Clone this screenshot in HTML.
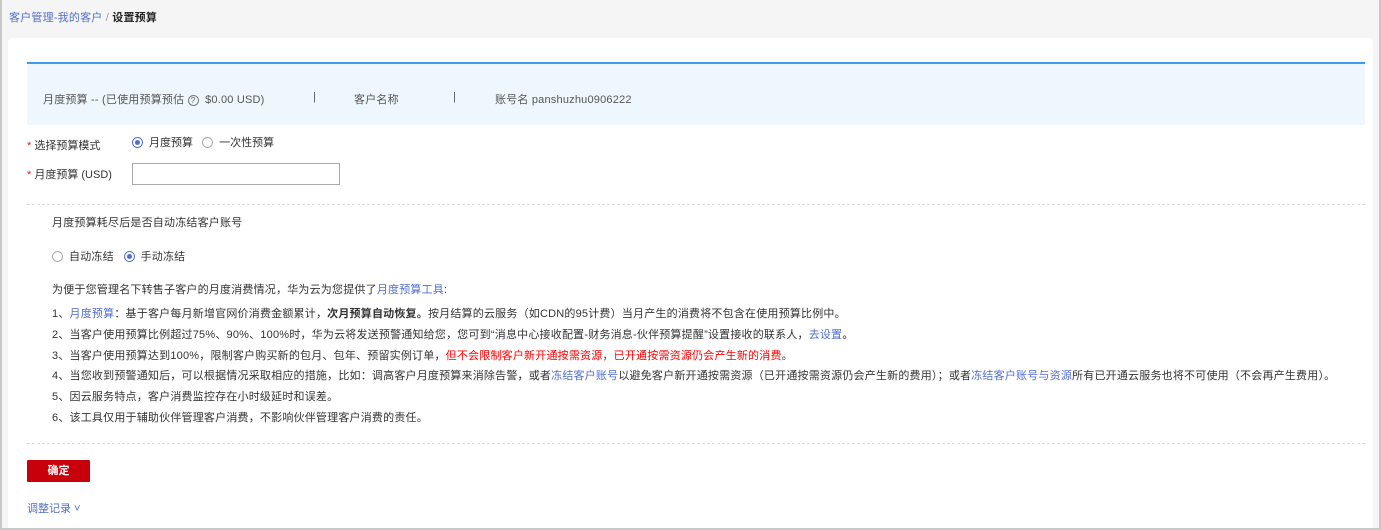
<!DOCTYPE html>
<html><head><meta charset="utf-8"><style>
*{margin:0;padding:0;box-sizing:border-box}
body{width:1381px;height:530px;overflow:hidden;background:#c8c8c8;font-family:"Liberation Sans","Noto Sans CJK SC",sans-serif;font-size:11px;color:#333;position:relative}
.frame{position:absolute;left:2px;top:0;width:1377px;height:528px;background:#f5f5f5}
.card{position:absolute;left:6px;top:38px;width:1365px;height:490px;background:#fff;border-radius:4px 4px 0 0}
.bc{position:absolute;left:7px;top:9px;font-size:11px;letter-spacing:0.2px}
.bc a{color:#526ecc}
.bc b{color:#222}
.banner{position:absolute;left:19px;top:24px;width:1338px;height:63px;background:#eef6fe;border-top:2px solid #3f9bf0}
.banner span{position:absolute;top:27px;color:#555;letter-spacing:0.2px}
.sep{color:#ccc}
.abs{position:absolute;white-space:nowrap}
.star{color:#e02020}
.radio{display:inline-block;width:11px;height:11px;border:1px solid #aaa;border-radius:50%;vertical-align:-2px;margin-right:6px;position:relative}
.radio.on{border-color:#526ecc}
.radio.on:after{content:"";position:absolute;left:2px;top:2px;width:5px;height:5px;border-radius:50%;background:#526ecc}
.dash{position:absolute;left:19px;width:1338px;border-top:1px dashed #ddd}
.blue{color:#526ecc}.red{color:#f00}
.line{position:absolute;left:44px;white-space:nowrap;letter-spacing:0.2px}
.btn{position:absolute;left:19px;top:422px;width:63px;height:22px;background:#c7000b;color:#fff;font-weight:bold;text-align:center;line-height:22px;border-radius:1px}
</style></head><body>
<div class="frame">
<div class="bc"><a>客户管理-我的客户</a> <span style="color:#999">/</span> <b>设置预算</b></div>
<div class="card">
<div class="banner">
<span style="left:16px">月度预算 -- (已使用预算预估 <span style="position:static;display:inline-block;width:11px;height:11px;border:1px solid #777;border-radius:50%;font-size:8px;text-align:center;line-height:9px">?</span> &nbsp;$0.00 USD)</span>
<span class="sep" style="left:286px">|</span>
<span style="left:327px">客户名称</span>
<span class="sep" style="left:426px">|</span>
<span style="left:468px">账号名 panshuzhu0906222</span>
</div>
<div class="abs" style="left:19px;top:99px"><span class="star">*</span> 选择预算模式</div>
<div class="abs" style="left:124px;top:96px"><span class="radio on"></span>月度预算 &nbsp;&nbsp;<span class="radio"></span>一次性预算</div>
<div class="abs" style="left:19px;top:128px"><span class="star">*</span> 月度预算 (USD)</div>
<div class="abs" style="left:124px;top:125px;width:208px;height:22px;border:1px solid #aaa"></div>
<div class="dash" style="top:166px"></div>
<div class="line" style="top:176px">月度预算耗尽后是否自动冻结客户账号</div>
<div class="line" style="top:210px"><span class="radio"></span>自动冻结 &nbsp;&nbsp;<span class="radio on"></span>手动冻结</div>
<div class="line" style="top:243px">为便于您管理名下转售子客户的月度消费情况，华为云为您提供了<span class="blue">月度预算工具</span>:</div>
<div class="line" style="top:267px">1、<span class="blue">月度预算</span>：基于客户每月新增官网价消费金额累计，<b>次月预算自动恢复。</b>按月结算的云服务（如CDN的95计费）当月产生的消费将不包含在使用预算比例中。</div>
<div class="line" style="top:288px">2、当客户使用预算比例超过75%、90%、100%时，华为云将发送预警通知给您，您可到“消息中心接收配置-财务消息-伙伴预算提醒”设置接收的联系人，<span class="blue">去设置</span>。</div>
<div class="line" style="top:309px">3、当客户使用预算达到100%，限制客户购买新的包月、包年、预留实例订单，<span class="red">但不会限制客户新开通按需资源，已开通按需资源仍会产生新的消费</span>。</div>
<div class="line" style="top:329px">4、当您收到预警通知后，可以根据情况采取相应的措施，比如：调高客户月度预算来消除告警，或者<span class="blue">冻结客户账号</span>以避免客户新开通按需资源（已开通按需资源仍会产生新的费用）；或者<span class="blue">冻结客户账号与资源</span>所有已开通云服务也将不可使用（不会再产生费用）。</div>
<div class="line" style="top:350px">5、因云服务特点，客户消费监控存在小时级延时和误差。</div>
<div class="line" style="top:371px">6、该工具仅用于辅助伙伴管理客户消费，不影响伙伴管理客户消费的责任。</div>
<div class="dash" style="top:405px"></div>
<div class="btn">确定</div>
<div class="abs blue" style="left:19px;top:462px">调整记录 ˅</div>
</div></div>
</body></html>
